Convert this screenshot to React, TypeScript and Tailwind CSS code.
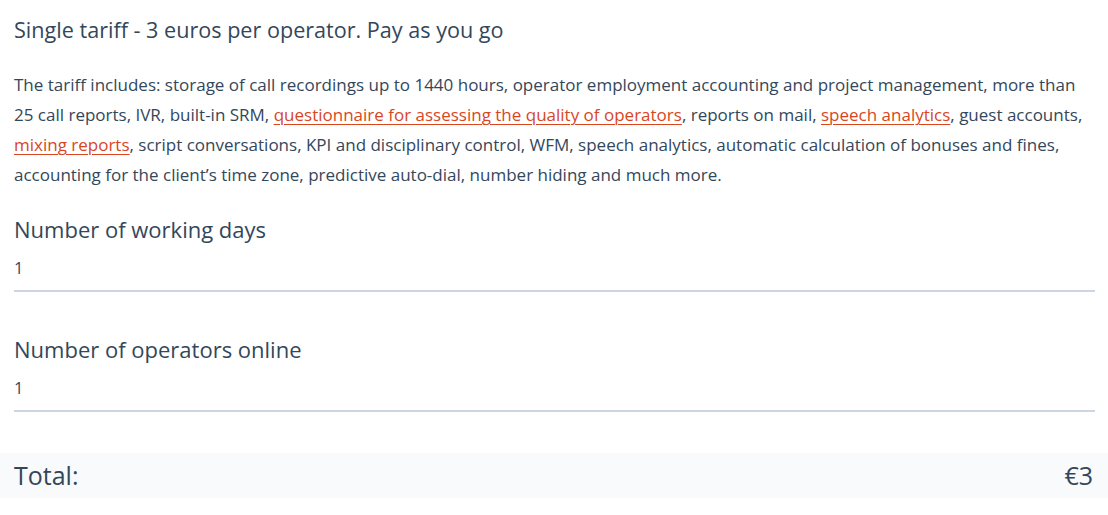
export default function App() {
  const link = 'text-[#d9461e] underline underline-offset-[3px] decoration-1';
  return (
    <div className="w-[1108px] h-[515px] bg-white text-[#33475b] font-['Open_Sans',sans-serif]">
      <div className="pl-[14px] pr-[13px]">
        <h1 className="pt-[15px] h-[46px] text-[21.6px] leading-[30px] font-normal">
          Single tariff - 3 euros per operator. Pay as you go
        </h1>
        <p className="mt-[24px] pr-[8px] text-[17px] leading-[30px]">
          The tariff includes: storage of call recordings up to 1440 hours, operator employment accounting and
          project management, more than 25 call reports, IVR, built-in SRM,{' '}
          <a className={link}>questionnaire for assessing the quality of operators</a>, reports on mail,{' '}
          <a className={link}>speech analytics</a>, guest accounts, <a className={link}>mixing reports</a>, script
          conversations, KPI and disciplinary control, WFM, speech analytics, automatic calculation of bonuses and
          fines, accounting for the client’s time zone, predictive auto-dial, number hiding and much more.
        </p>

        <Field label="Number of working days" value="1" className="mt-[24px]" />
        <Field label="Number of operators online" value="1" className="mt-[42px]" />
      </div>

      <div className="mt-[41px] h-[45px] bg-[#f9fafb] px-[14px] flex items-center justify-between text-[25px]">
        <span>Total:</span>
        <span className="pr-[1px]">€3</span>
      </div>
    </div>
  );
}

function Field({ label, value, className }: { label: string; value: string; className?: string }) {
  return (
    <div className={className}>
      <div className="text-[22px] leading-[30px]">{label}</div>
      <div className="mt-[11px] text-[16.5px] leading-[25px] pb-[10px] border-b-2 border-[#cbd6e2]">{value}</div>
    </div>
  );
}
